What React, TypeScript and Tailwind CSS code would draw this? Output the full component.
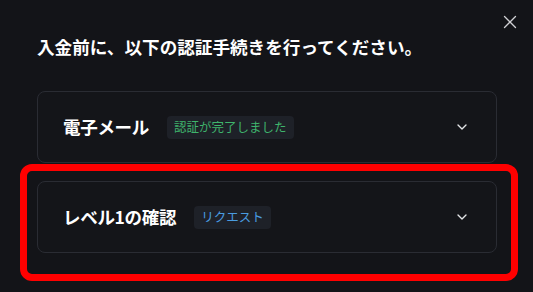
import { ChevronDown, X } from "lucide-react";

const font = { fontFamily: '"Noto Sans CJK JP", "Noto Sans", sans-serif' };

interface Step {
    title: string;
    status: string;
    tone: "done" | "pending";
}

const steps: Step[] = [
    { title: "電子メール", status: "認証が完了しました", tone: "done" },
    { title: "レベル1の確認", status: "リクエスト", tone: "pending" },
];

const StepCard = ({ step }: { step: Step }) => (
    <div className="flex items-center h-[72px] pl-[25px] pr-[26px] rounded-[8px] border border-[#2a2c33] bg-[#141519]">
        <span className="text-[17.5px] font-bold text-white leading-none tracking-[-0.3px]">{step.title}</span>
        <span
            className={
                step.tone === "done"
                    ? "ml-[18px] h-[23px] px-[7px] flex items-center rounded-[4px] bg-[#1e2128] text-[12.5px] text-[#3fb46c]"
                    : "ml-[18px] h-[23px] px-[7px] flex items-center rounded-[4px] bg-[#1e2128] text-[12.5px] text-[#4a9ce0]"
            }
        >
            {step.status}
        </span>
        <ChevronDown className="ml-auto text-[#e4e5e7]" size={16} strokeWidth={2} />
    </div>
);

export default function App() {
    return (
        <div style={font} className="relative w-[533px] h-[292px] overflow-hidden bg-[#131418] px-[37px] pt-[35px]">
            <button className="absolute top-[11px] right-[12px] text-[#d0d1d4]">
                <X size={22} strokeWidth={1.4} />
            </button>

            <h2 className="text-[17.6px] font-bold text-white leading-[24px]">
                入金前に、以下の認証手続きを行ってください。
            </h2>

            <div className="mt-[32px] flex flex-col gap-[18px] w-[460px]">
                {steps.map((s) => (
                    <StepCard key={s.title} step={s} />
                ))}
            </div>

            {/* highlight annotation */}
            <div className="absolute left-[20px] top-[164px] w-[498px] h-[117px] rounded-[12px] border-[7px] border-[#ff0000] pointer-events-none" />
        </div>
    );
}
